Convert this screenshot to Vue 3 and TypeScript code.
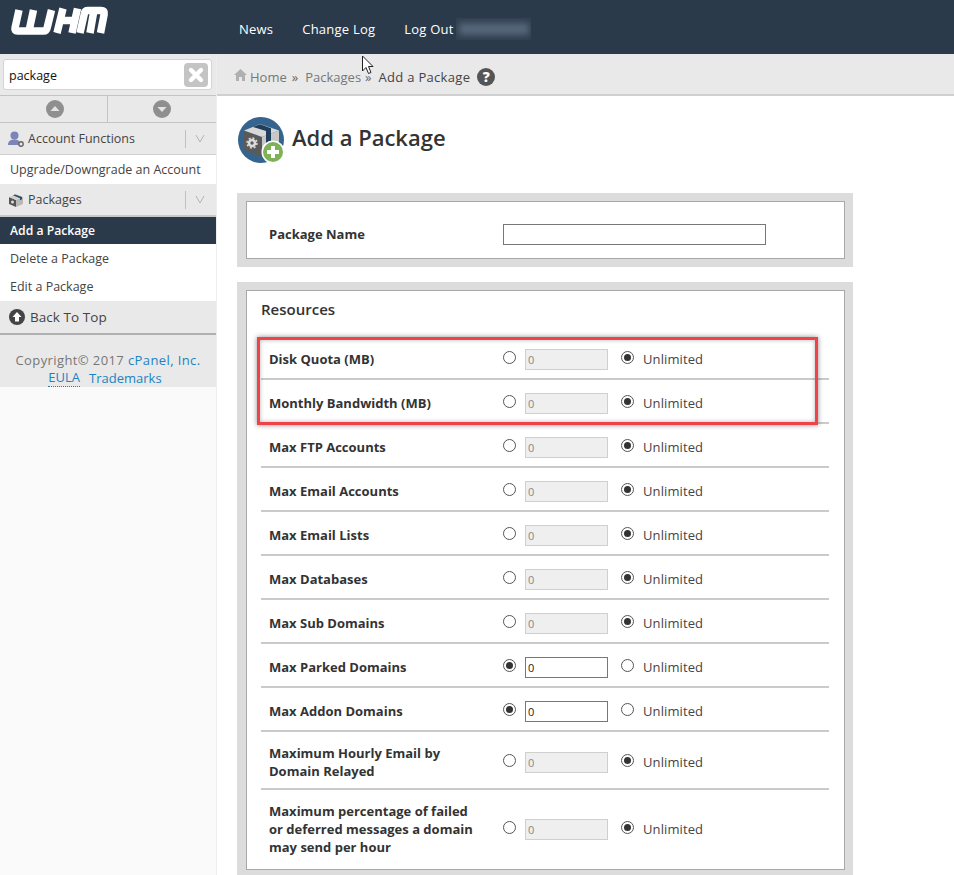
<script setup lang="ts">
interface Row { label: string[]; limited: boolean; h: number }
const rows: Row[] = [
  { label: ['Disk Quota (MB)'], limited: false, h: 44 },
  { label: ['Monthly Bandwidth (MB)'], limited: false, h: 44 },
  { label: ['Max FTP Accounts'], limited: false, h: 44 },
  { label: ['Max Email Accounts'], limited: false, h: 44 },
  { label: ['Max Email Lists'], limited: false, h: 44 },
  { label: ['Max Databases'], limited: false, h: 44 },
  { label: ['Max Sub Domains'], limited: false, h: 44 },
  { label: ['Max Parked Domains'], limited: true, h: 44 },
  { label: ['Max Addon Domains'], limited: true, h: 44 },
  { label: ['Maximum Hourly Email by', 'Domain Relayed'], limited: false, h: 58 },
  { label: ['Maximum percentage of failed', 'or deferred messages a domain', 'may send per hour'], limited: false, h: 76 },
]
</script>

<template>
  <div class="page">
    <header class="topbar">
      <div class="logo">
        <svg width="104" height="34" viewBox="8 5 104 34" aria-label="WHM">
          <g fill="none" stroke="#fff" stroke-width="7.500" stroke-linejoin="round">
            <path d="M19 11l-4 18q-.6 3 2.500 3h26q3 0 3.600-3L51.500 11M33.500 11L29 32"/>
            <path d="M63 9.500L57 34M77.500 9.500L72 34M60 21.500h15"/>
            <path d="M80 34l4.500-20q.5-2.500 3.500-2.500h13q4 0 3.200 3.500L100.500 34M94 11L90 34"/>
          </g>
        </svg>
      </div>
      <nav class="topnav">
        <span>News</span>
        <span>Change Log</span>
        <span>Log Out</span>
      </nav>
      <div class="blurred"><span class="smear"></span></div>
    </header>
    <div class="body">
      <aside class="side">
        <div class="search">
          <div class="searchbox">
            <span class="stext">package</span>
            <span class="clear">
              <svg width="24" height="24" viewBox="0 0 24 24"><rect width="24" height="24" rx="4" fill="#c4c4c4"/><path d="M7 7l10 10M17 7L7 17" stroke="#fff" stroke-width="4.400" stroke-linecap="round"/></svg>
            </span>
          </div>
        </div>
        <div class="arrows">
          <div class="arrow a1">
            <svg width="18" height="18" viewBox="0 0 18 18"><circle cx="9" cy="9" r="9" fill="#8f8f8f"/><path d="M4.500 11L9 6l4.500 5z" fill="#e4e4e4"/></svg>
          </div>
          <div class="arrow a2">
            <svg width="18" height="18" viewBox="0 0 18 18"><circle cx="9" cy="9" r="9" fill="#8f8f8f"/><path d="M4.500 7L9 12l4.500-5z" fill="#e4e4e4"/></svg>
          </div>
        </div>
        <div class="group g1">
          <svg class="gicon" width="16" height="16" viewBox="0 0 16 16"><circle cx="6.500" cy="4.500" r="4" fill="#7c84b8"/><path d="M0 14c0-4 2.500-5.500 6.500-5.500 2 0 3.500.5 4.500 1.500v4z" fill="#7c84b8"/><circle cx="13" cy="13" r="2.200" fill="none" stroke="#666" stroke-width="1.400"/></svg>
          <span class="gtext">Account Functions</span>
          <span class="gsep"></span>
          <svg class="chev" width="10" height="9" viewBox="0 0 10 9"><path d="M1 1l4 7 4-7" fill="none" stroke="#b4b4b4" stroke-width="1"/></svg>
        </div>
        <div class="item i1">Upgrade/Downgrade an Account</div>
        <div class="group g2">
          <svg class="gicon" width="16" height="16" viewBox="0 0 16 16"><path d="M1 5l7 3v7l-7-3z" fill="#555"/><path d="M8 8l7-3v7l-7 3z" fill="#b8b8b8"/><path d="M1 5l7-3 7 3-7 3z" fill="#d0d0d0"/><path d="M5 3.300l7 3v2l2-1V5L7 2.400z" fill="#2b4a66"/><circle cx="4.500" cy="10" r="1.500" fill="#ddd"/></svg>
          <span class="gtext">Packages</span>
          <span class="gsep"></span>
          <svg class="chev" width="10" height="9" viewBox="0 0 10 9"><path d="M1 1l4 7 4-7" fill="none" stroke="#b4b4b4" stroke-width="1"/></svg>
        </div>
        <div class="item active">Add a Package</div>
        <div class="item i3">Delete a Package</div>
        <div class="item i4">Edit a Package</div>
        <div class="back">
          <svg width="16" height="16" viewBox="0 0 16 16"><circle cx="8" cy="8" r="8" fill="#444"/><path d="M8 3l4.500 5H10v4.500H6V8H3.500z" fill="#fff"/></svg>
          <span>Back To Top</span>
        </div>
        <div class="copy">
          <div class="copy1">Copyright© 2017 <span class="link">cPanel, Inc.</span></div>
          <div class="copy2"><span class="link dotted">EULA</span><span class="link">Trademarks</span></div>
        </div>
      </aside>
      <main class="main">
        <div class="crumbs">
          <svg class="home" width="13" height="12" viewBox="0 0 13 12"><path d="M6.500 0L13 6h-2v6H8V8H5v4H2V6H0z" fill="#b0b0b0"/></svg>
          <span class="crumb">Home</span>
          <span class="sep">»</span>
          <span class="crumb c2">Packages</span>
          <span class="sep s2">»</span>
          <span class="cur">Add a Package</span>
          <span class="help">?</span>
        </div>
        <div class="content">
          <div class="title">
            <svg width="47" height="47" viewBox="0 0 47 47">
              <circle cx="23" cy="23" r="23" fill="#35658f"/>
              <path d="M6 13.500L24 20v20L6 33z" fill="#5a5a5a"/>
              <path d="M24 20l17-6.500V33l-17 7z" fill="#c8c8c8"/>
              <path d="M6 13.500L22 7l19 6.500L24 20z" fill="#d8d8d8"/>
              <path d="M15 10l7-2.800 11 4V24l-5 2V14z" fill="#1f3f5c"/>
              <circle cx="14" cy="26" r="3" fill="none" stroke="#dcdcdc" stroke-width="2.600"/>
              <circle cx="14" cy="26" r="5" fill="none" stroke="#dcdcdc" stroke-width="1.500" stroke-dasharray="2 1.900"/>
              <circle cx="35" cy="35" r="11.500" fill="#fff"/>
              <circle cx="35" cy="35" r="10" fill="#7db257"/>
              <path d="M35 29v12M29 35h12" stroke="#fff" stroke-width="4"/>
            </svg>
            <h1>Add a Package</h1>
          </div>
          <section class="panel p1">
            <div class="inner nameinner">
              <label class="lab">Package Name</label>
              <span class="nameinput"></span>
            </div>
          </section>
          <section class="panel p2">
            <div class="inner resinner">
              <h2>Resources</h2>
              <div class="rows">
                <div v-for="r in rows" :key="r.label[0]" class="row" :style="{ height: r.h + 'px' }">
                  <div class="lab rlab"><div v-for="l in r.label" :key="l">{{ l }}</div></div>
                  <span class="radio" :class="{ on: r.limited }"></span>
                  <span class="num" :class="{ enabled: r.limited }">0</span>
                  <span class="radio r2" :class="{ on: !r.limited }"></span>
                  <span class="unl">Unlimited</span>
                </div>
              </div>
              <div class="highlight"></div>
            </div>
          </section>
        </div>
      </main>
    </div>
    <svg class="cursor" width="14" height="21" viewBox="0 0 14 21"><path d="M1.500 1v15l3.500-3.500 2.500 6 2.500-1-2.500-6H12z" fill="#fff" stroke="#222" stroke-width="1"/></svg>
  </div>
</template>

<style>
html, body { margin: 0; padding: 0; background: #fff; overflow: hidden; }
</style>

<style scoped>
.page { position: relative; width: 954px; height: 875px; overflow: hidden; font-family: "Open Sans", "Noto Sans", sans-serif; font-size: 13px; color: #333; }
.topbar { height: 54px; background: #2b3a4a; display: flex; position: relative; }
.logo { width: 216px; padding: 4px 0 0 8px; box-sizing: border-box; flex: none; }
.logo svg { display: block; }
.topnav { display: flex; gap: 29px; padding: 0 0 0 23px; color: #fff; line-height: 59px; letter-spacing: .22px; }
.blurred { position: absolute; left: 456px; top: 18px; width: 75px; height: 22px; background: #303f50; display: flex; align-items: center; justify-content: center; overflow: hidden; }
.smear { width: 70px; height: 12px; background: #56677a; filter: blur(3px); }
.body { display: flex; height: 821px; }
.side { width: 217px; flex: none; background: #fafafa; border-right: 1px solid #ededed; box-sizing: border-box; }
.search { height: 41px; background: #e9e9e9; padding: 5px 4px 0 3px; box-sizing: border-box; }
.searchbox { height: 31px; background: #fff; border: 1px solid #d4d4d4; border-radius: 3px; box-sizing: border-box; display: flex; align-items: center; justify-content: space-between; padding: 0 3px 0 5px; color: #111; font-size: 12.500px; }
.stext { padding-top: 2px; }
.clear { display: flex; }
.arrows { display: flex; height: 28px; background: #e9e9e9; border-top: 1px solid #c4c4c4; border-bottom: 1px solid #c4c4c4; box-sizing: border-box; }
.arrow { display: flex; align-items: center; justify-content: center; box-sizing: border-box; }
.a1 { width: 107px; padding-left: 3px; }
.a2 { flex: 1; border-left: 1px solid #c4c4c4; }
.group { background: #e9e9e9; display: flex; align-items: center; padding: 0 11px 0 8px; box-sizing: border-box; color: #444; font-size: 12.500px; }
.g1 { height: 32px; border-bottom: 1px solid #d0d0d0; }
.g2 { height: 33px; border-bottom: 2px solid #c8c8c8; }
.gicon { flex: none; }
.gtext { margin-left: 4px; flex: 1; }
.gsep { width: 1px; height: 18px; background: #c0c0c0; margin-right: 9px; }
.item { background: #fff; padding-left: 10px; box-sizing: border-box; color: #444; font-size: 12.500px; display: flex; align-items: center; }
.i1 { height: 29px; }
.i3 { height: 28px; }
.i4 { height: 29px; }
.active { height: 27px; background: #2b3a4a; color: #fff; font-weight: 600; font-size: 12.200px; }
.back { height: 34px; background: #e9e9e9; border-bottom: 2px solid #b0b0b0; box-sizing: border-box; display: flex; align-items: center; gap: 5px; padding-left: 9px; color: #444; font-size: 13.500px; letter-spacing: .05px; }
.copy { height: 52px; background: #e9e9e9; text-align: center; padding-top: 16px; box-sizing: border-box; color: #777; font-size: 13px; line-height: 18px; }
.copy1 { letter-spacing: .4px; }
.copy2 { display: flex; justify-content: center; gap: 9px; padding-right: 6px; }
.link { color: #1b83c4; }
.dotted { border-bottom: 1px dotted #1b83c4; line-height: 17px; }
.main { flex: 1; background: #fff; }
.crumbs { height: 42px; background: #e9e9e9; border-bottom: 2px solid #d0d0d0; box-sizing: border-box; display: flex; align-items: center; padding: 6px 0 0 17px; color: #444; font-size: 13px; }
.home { margin-right: 3px; margin-top: -4px; }
.crumb { color: #777; }
.sep { margin: 0 7px 0 5px; color: #666; }
.s2 { margin: 0 7px 0 4px; }
.cur { color: #444; letter-spacing: .3px; }
.help { width: 18px; height: 18px; border-radius: 50%; background: #555; color: #fff; font-weight: 800; font-size: 14px; line-height: 18px; text-align: center; margin-left: 7px; }
.content { padding: 21px 0 0 20px; }
.title { display: flex; align-items: center; height: 47px; gap: 7px; margin-left: 1px; }
h1 { margin: 0; font-size: 22px; font-weight: 600; color: #333; line-height: 1; padding-bottom: 8px; }
.panel { width: 616px; background: #dcdcdc; padding: 8px 8px 8px 9px; box-sizing: border-box; }
.p1 { margin-top: 29px; height: 74px; }
.p2 { margin-top: 15px; height: 600px; }
.inner { background: #fff; border: 1px solid #a8a8a8; box-sizing: border-box; }
.nameinner { height: 58px; display: flex; align-items: center; padding: 8px 0 0 22px; }
.lab { font-weight: 700; color: #333; font-size: 13px; line-height: 18px; }
.nameinner .lab { width: 234px; }
.nameinput { width: 263px; height: 21px; border: 1px solid #777; box-sizing: border-box; }
.resinner { position: relative; height: 580px; padding: 8px 15px 0 14px; }
h2 { margin: 0; font-size: 15px; font-weight: 600; color: #333; line-height: 20px; height: 37px; }
.row { display: flex; align-items: center; border-bottom: 2px solid #cacaca; box-sizing: border-box; padding: 4px 0 0 8px; }
.row:last-child { border-bottom: none; padding-top: 2px; }
.rlab { width: 234px; flex: none; }
.radio { width: 13px; height: 13px; border: 1px solid #555; border-radius: 50%; box-sizing: border-box; flex: none; background: #fff; position: relative; top: -2px; }
.radio.on::after { content: ""; position: absolute; left: 2px; top: 2px; width: 7px; height: 7px; border-radius: 50%; background: #333; }
.num { width: 83px; height: 21px; margin-left: 9px; border: 1px solid #cfcfcf; background: #efefef; box-sizing: border-box; color: #888; font-size: 11px; line-height: 20px; padding-left: 2px; flex: none; }
.num.enabled { background: #fff; border-color: #777; color: #222; }
.r2 { margin-left: 13px; }
.unl { margin-left: 9px; color: #444; letter-spacing: .1px; }
.highlight { position: absolute; left: 10px; top: 46px; width: 561px; height: 88px; border: 3px solid #f04248; box-sizing: border-box; box-shadow: 0 0 5px rgba(0,0,0,.45), inset 0 0 4px rgba(0,0,0,.3); }
.cursor { position: absolute; left: 361px; top: 55px; }
</style>
